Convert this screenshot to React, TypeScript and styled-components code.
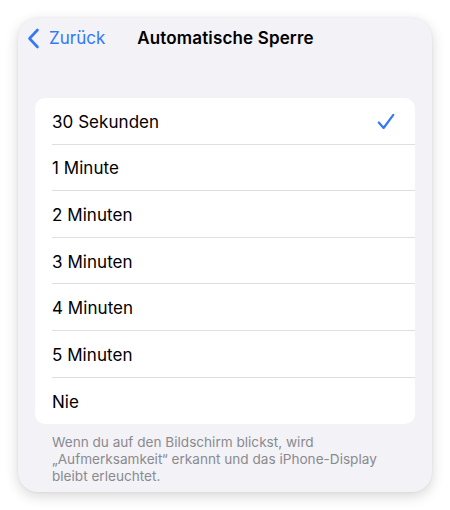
import React from 'react';
import styled, { createGlobalStyle } from 'styled-components';

const GlobalStyle = createGlobalStyle`
    html, body {
        margin: 0;
        padding: 0;
        background: #ffffff;
    }
    body {
        font-family: Inter, 'Noto Sans', 'Liberation Sans', sans-serif;
        -webkit-font-smoothing: antialiased;
    }
`;

const Page = styled.div`
    padding: 18px;
    width: 450px;
    height: 510px;
    box-sizing: border-box;
`;

const Panel = styled.div`
    background: #f2f2f7;
    height: 474px;
    border-radius: 20px;
    box-shadow: 0 4px 14px rgba(0, 0, 0, 0.16), 0 0 3px rgba(0, 0, 0, 0.06);
    display: flex;
    flex-direction: column;
    overflow: hidden;
`;

const NavBar = styled.div`
    display: flex;
    align-items: center;
    height: 40px;
    padding: 0 10px 0 9px;
`;

const BackButton = styled.div`
    display: flex;
    align-items: center;
    gap: 9px;
    color: #3478f6;
    font-size: 17px;
`;

const Title = styled.div`
    margin-left: 32px;
    font-size: 17px;
    font-weight: 600;
    color: #000;
    letter-spacing: 0.15px;
`;

const Card = styled.div`
    margin: 40px 17px 0;
    background: #ffffff;
    border-radius: 10px;
    overflow: hidden;
`;

const Row = styled.div<{ $last?: boolean }>`
    display: flex;
    align-items: center;
    justify-content: space-between;
    height: 46.6px;
    margin-left: 17px;
    padding: 2px 20px 0 0;
    box-sizing: border-box;
    border-bottom: ${({ $last }) => ($last ? 'none' : '0.5px solid #dedee3')};
    font-size: 17px;
    color: #000;
    letter-spacing: 0.05px;
`;

const Footer = styled.div`
    padding: 10px 30px 0 34px;
    font-size: 13.6px;
    line-height: 16.8px;
    color: #8a8a8e;
`;

const options = ['30 Sekunden', '1 Minute', '2 Minuten', '3 Minuten', '4 Minuten', '5 Minuten', 'Nie'];

const Chevron = () => (
    <svg width="13" height="21" viewBox="0 0 13 21">
        <path d="M10.5 2 L2.5 10.5 L10.5 19" fill="none" stroke="#3478f6" strokeWidth="2.6" strokeLinecap="round" strokeLinejoin="round" />
    </svg>
);

const Check = () => (
    <svg width="18" height="17" viewBox="0 0 18 17">
        <path d="M1.8 9.5 L6.6 15 L16.3 1.8" fill="none" stroke="#3478f6" strokeWidth="2.2" strokeLinecap="round" strokeLinejoin="round" />
    </svg>
);

const App = () => {
    return (
        <Page>
            <GlobalStyle />
            <Panel>
                <NavBar>
                    <BackButton>
                        <Chevron />
                        Zurück
                    </BackButton>
                    <Title>Automatische Sperre</Title>
                </NavBar>
                <Card>
                    {options.map((o, i) => (
                        <Row key={o} $last={i === options.length - 1}>
                            {o}
                            {i === 0 && <Check />}
                        </Row>
                    ))}
                </Card>
                <Footer>
                    Wenn du auf den Bildschirm blickst, wird „Aufmerksamkeit“ erkannt und das iPhone-Display bleibt erleuchtet.
                </Footer>
            </Panel>
        </Page>
    );
};

export default App;
